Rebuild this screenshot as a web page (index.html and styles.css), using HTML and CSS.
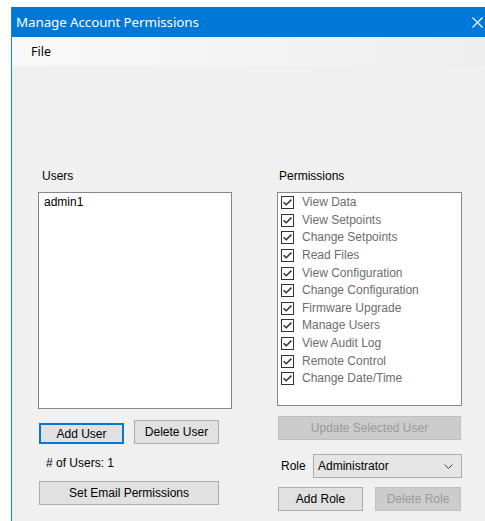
FILE: index.html
```html
<!DOCTYPE html>
<html lang="en">
<head>
<meta charset="utf-8">
<title>Manage Account Permissions</title>
<link rel="stylesheet" href="styles.css">
</head>
<body>
<div class="window">
  <div class="titlebar">
    <span class="title">Manage Account Permissions</span>
    <svg class="close" width="11" height="11" viewBox="0 0 11 11">
      <path d="M0.5 0.5 L10.5 10.5 M10.5 0.5 L0.5 10.5" stroke="#ffffff" stroke-width="1.1" fill="none"/>
    </svg>
  </div>
  <div class="menubar">
    <span class="menu-item">File</span>
  </div>
  <div class="client">
    <div class="col col-users">
      <div class="label label-users">Users</div>
      <div class="listbox users-list">
        <div class="list-row">admin1</div>
      </div>
      <div class="btn-row user-buttons">
        <button class="btn btn-focused btn-add-user">Add User</button>
        <button class="btn btn-delete-user">Delete User</button>
      </div>
      <div class="count">#&nbsp;of Users: 1</div>
      <button class="btn btn-email">Set Email Permissions</button>
    </div>
    <div class="col col-perms">
      <div class="label label-perms">Permissions</div>
      <div class="listbox perms-list">
        <div class="perm"><svg class="check" viewBox="0 0 13 13"><rect x="0.5" y="0.5" width="12" height="12" fill="#fff" stroke="#333"/><path d="M2.6 6.2 L5.2 8.8 L10.4 3.6" stroke="#333" stroke-width="1.5" fill="none"/></svg><span class="perm-text">View Data</span></div>
        <div class="perm"><svg class="check" viewBox="0 0 13 13"><rect x="0.5" y="0.5" width="12" height="12" fill="#fff" stroke="#333"/><path d="M2.6 6.2 L5.2 8.8 L10.4 3.6" stroke="#333" stroke-width="1.5" fill="none"/></svg><span class="perm-text">View Setpoints</span></div>
        <div class="perm"><svg class="check" viewBox="0 0 13 13"><rect x="0.5" y="0.5" width="12" height="12" fill="#fff" stroke="#333"/><path d="M2.6 6.2 L5.2 8.8 L10.4 3.6" stroke="#333" stroke-width="1.5" fill="none"/></svg><span class="perm-text">Change Setpoints</span></div>
        <div class="perm"><svg class="check" viewBox="0 0 13 13"><rect x="0.5" y="0.5" width="12" height="12" fill="#fff" stroke="#333"/><path d="M2.6 6.2 L5.2 8.8 L10.4 3.6" stroke="#333" stroke-width="1.5" fill="none"/></svg><span class="perm-text">Read Files</span></div>
        <div class="perm"><svg class="check" viewBox="0 0 13 13"><rect x="0.5" y="0.5" width="12" height="12" fill="#fff" stroke="#333"/><path d="M2.6 6.2 L5.2 8.8 L10.4 3.6" stroke="#333" stroke-width="1.5" fill="none"/></svg><span class="perm-text">View Configuration</span></div>
        <div class="perm"><svg class="check" viewBox="0 0 13 13"><rect x="0.5" y="0.5" width="12" height="12" fill="#fff" stroke="#333"/><path d="M2.6 6.2 L5.2 8.8 L10.4 3.6" stroke="#333" stroke-width="1.5" fill="none"/></svg><span class="perm-text">Change Configuration</span></div>
        <div class="perm"><svg class="check" viewBox="0 0 13 13"><rect x="0.5" y="0.5" width="12" height="12" fill="#fff" stroke="#333"/><path d="M2.6 6.2 L5.2 8.8 L10.4 3.6" stroke="#333" stroke-width="1.5" fill="none"/></svg><span class="perm-text">Firmware Upgrade</span></div>
        <div class="perm"><svg class="check" viewBox="0 0 13 13"><rect x="0.5" y="0.5" width="12" height="12" fill="#fff" stroke="#333"/><path d="M2.6 6.2 L5.2 8.8 L10.4 3.6" stroke="#333" stroke-width="1.5" fill="none"/></svg><span class="perm-text">Manage Users</span></div>
        <div class="perm"><svg class="check" viewBox="0 0 13 13"><rect x="0.5" y="0.5" width="12" height="12" fill="#fff" stroke="#333"/><path d="M2.6 6.2 L5.2 8.8 L10.4 3.6" stroke="#333" stroke-width="1.5" fill="none"/></svg><span class="perm-text">View Audit Log</span></div>
        <div class="perm"><svg class="check" viewBox="0 0 13 13"><rect x="0.5" y="0.5" width="12" height="12" fill="#fff" stroke="#333"/><path d="M2.6 6.2 L5.2 8.8 L10.4 3.6" stroke="#333" stroke-width="1.5" fill="none"/></svg><span class="perm-text">Remote Control</span></div>
        <div class="perm"><svg class="check" viewBox="0 0 13 13"><rect x="0.5" y="0.5" width="12" height="12" fill="#fff" stroke="#333"/><path d="M2.6 6.2 L5.2 8.8 L10.4 3.6" stroke="#333" stroke-width="1.5" fill="none"/></svg><span class="perm-text">Change Date/Time</span></div>
      </div>
      <button class="btn btn-disabled btn-update" disabled>Update Selected User</button>
      <div class="role-row">
        <span class="role-label">Role</span>
        <div class="combo">
          <span class="combo-text">Administrator</span>
          <svg class="chevron" width="9" height="5" viewBox="0 0 9 5">
            <path d="M0.5 0.5 L4.5 4.5 L8.5 0.5" stroke="#444" stroke-width="1" fill="none"/>
          </svg>
        </div>
      </div>
      <div class="btn-row role-buttons">
        <button class="btn btn-role">Add Role</button>
        <button class="btn btn-disabled btn-role-del" disabled>Delete Role</button>
      </div>
    </div>
  </div>
</div>
</body>
</html>
```
FILE: styles.css
```css
html, body {
  margin: 0;
  padding: 0;
  background: #ffffff;
  height: 100%;
}

body {
  font-family: "Liberation Sans", Arial, sans-serif;
  font-size: 12px;
  color: #000;
  overflow: hidden;
}

.window {
  margin: 7px 0 0 11px;
  border-left: 1px solid #1883d7;
  height: 514px;
  background: #f0f0f0;
  display: flex;
  flex-direction: column;
}

/* caption */
.titlebar {
  height: 30px;
  flex: none;
  background: #0078d7;
  color: #ffffff;
  display: flex;
  align-items: center;
  justify-content: space-between;
  padding: 0 2px 0 4px;
  font-family: "Noto Sans", "Open Sans", sans-serif;
  font-size: 13.4px;
}

.title {
  letter-spacing: -0.1px;
}

.close {
  display: block;
  margin-top: 1px;
}

/* menu strip */
.menubar {
  height: 29px;
  flex: none;
  background: linear-gradient(to right, #f9f9f9, #eeeeee);
  display: flex;
  align-items: center;
  padding-left: 19px;
  font-family: "Noto Sans", "Open Sans", sans-serif;
  font-size: 12.5px;
}

.client {
  display: flex;
  gap: 45px;
  padding: 102px 0 0 26px;
}

.col {
  display: flex;
  flex-direction: column;
  align-items: flex-start;
}

.col-users { width: 194px; }
.col-perms { width: 185px; }

.label {
  height: 16px;
  line-height: 16px;
  margin-bottom: 8px;
}

.label-users { padding-left: 4px; }
.label-perms { padding-left: 2px; }

.listbox {
  box-sizing: border-box;
  background: #ffffff;
  border: 1px solid #828790;
}

.users-list {
  width: 194px;
  height: 217px;
  padding: 2px 0 0 5px;
}

.list-row {
  line-height: 15px;
}

.perms-list {
  width: 185px;
  height: 214px;
  padding: 1px 0 0 3px;
}

.perm {
  height: 17.6px;
  display: flex;
  align-items: center;
}

.check {
  display: block;
  width: 13px;
  height: 13px;
  flex: none;
}

.perm-text {
  margin-left: 8px;
  color: #6d6d6d;
  line-height: 15px;
}

/* buttons */
.btn {
  box-sizing: border-box;
  font-family: "Liberation Sans", Arial, sans-serif;
  font-size: 12px;
  color: #000;
  background: #e1e1e1;
  border: 1px solid #adadad;
  border-radius: 0;
  padding: 0;
  margin: 0;
  height: 24px;
  line-height: 20px;
}

.btn-focused {
  border: 2px solid #0078d7;
}

.btn-disabled {
  background: #cccccc;
  border-color: #bfbfbf;
  color: #9a9a9a;
}

.btn-row {
  display: flex;
  align-items: flex-end;
}

.user-buttons {
  margin: 11px 0 0 1px;
  gap: 10px;
}

.btn-add-user {
  width: 85px;
  height: 21px;
  line-height: 16px;
}

.btn-delete-user {
  width: 85px;
}

.count {
  margin-top: 11px;
  padding-left: 8px;
  line-height: 16px;
  height: 16px;
}

.btn-email {
  margin: 10px 0 0 1px;
  width: 180px;
}

.btn-update {
  margin: 10px 0 0 1px;
  width: 183px;
}

.role-row {
  margin-top: 14px;
  width: 185px;
  display: flex;
  align-items: center;
  justify-content: space-between;
}

.role-label {
  padding-left: 4px;
}

.combo {
  box-sizing: border-box;
  width: 149px;
  height: 24px;
  background: #e5e5e5;
  border: 1px solid #adadad;
  display: flex;
  align-items: center;
  justify-content: space-between;
  padding: 0 8px 0 4px;
}

.chevron {
  display: block;
}

.role-buttons {
  margin: 9px 0 0 1px;
  gap: 12px;
}

.btn-role { width: 85px; }
.btn-role-del { width: 86px; }
```
